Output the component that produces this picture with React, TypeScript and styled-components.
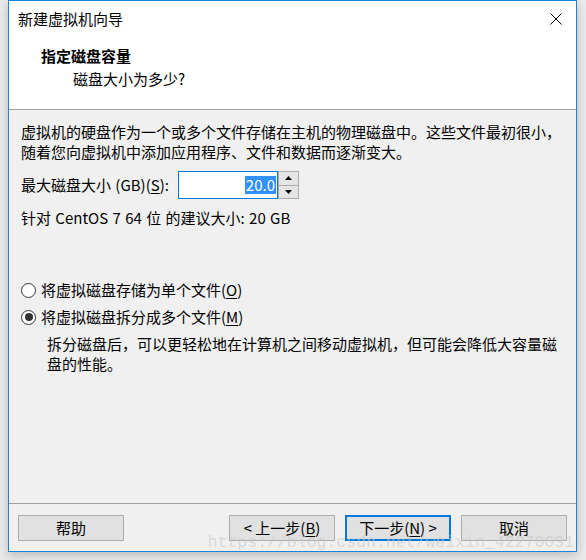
import styled, { createGlobalStyle } from "styled-components";

const GlobalStyle = createGlobalStyle`
	html, body {
		margin: 0;
		padding: 0;
		background: #ebebeb;
	}
	body {
		font-family: "Noto Sans CJK SC", "Noto Sans", sans-serif;
		font-size: 15px;
		color: #000;
	}
`;

const Page = styled.div`
	width: 586px;
	height: 560px;
	padding-left: 8px;
	box-sizing: border-box;
	overflow: hidden;
`;

const Window = styled.div`
	position: relative;
	width: 569px;
	height: 552px;
	box-sizing: border-box;
	border: 1px solid #1883d7;
	background: #f0f0f0;
	display: flex;
	flex-direction: column;
	box-shadow: 0 3px 10px rgba(0, 0, 0, 0.22);
`;

const TitleBar = styled.div`
	height: 36px;
	background: #fff;
	display: flex;
	align-items: center;
	justify-content: space-between;
	padding: 0 14px 0 9px;
	line-height: 20px;
`;

const Header = styled.div`
	background: #fff;
	height: 73px;
	box-sizing: border-box;
	padding: 9px 0 0 32px;
	border-bottom: 1px solid #a0a0a0;
	line-height: 20px;
`;

const HeaderTitle = styled.div`
	font-weight: 700;
`;

const HeaderSub = styled.div`
	margin: 3px 0 0 32px;
`;

const Content = styled.div`
	flex: 1;
	padding: 12px 12px 0 12px;
	line-height: 20px;
`;

const Paragraph = styled.div`
	white-space: nowrap;
`;

const SizeRow = styled.div`
	display: flex;
	align-items: center;
	margin-top: 9px;
`;

const SizeLabel = styled.div`
	width: 157px;
	word-spacing: 1px;
`;

const NumberBox = styled.div`
	width: 100px;
	height: 28px;
	box-sizing: border-box;
	border: 1px solid #0078d7;
	background: #fff;
	display: flex;
	align-items: center;
	justify-content: flex-end;
	padding-right: 1px;
`;

const Selected = styled.span`
	background: #3390ff;
	color: #fff;
	line-height: 18px;
	padding: 0 1px;
`;

const Spinner = styled.div`
	display: flex;
	flex-direction: column;
	width: 21px;
	height: 28px;
`;

const SpinButton = styled.div`
	flex: 1;
	box-sizing: border-box;
	border: 1px solid #adadad;
	background: #e5e5e5;
	display: flex;
	align-items: center;
	justify-content: center;
	& + & {
		border-top: none;
	}
`;

const Hint = styled.div`
	margin-top: 9px;
	word-spacing: 1px;
`;

const RadioRow = styled.div<{ $first?: boolean }>`
	display: flex;
	align-items: center;
	gap: 5px;
	margin-top: ${(p) => (p.$first ? "52px" : "7px")};
`;

const RadioCircle = styled.span<{ $checked?: boolean }>`
	width: 15px;
	height: 15px;
	box-sizing: border-box;
	border-radius: 50%;
	border: 1px solid #333;
	background: #fff;
	display: flex;
	align-items: center;
	justify-content: center;
	&::after {
		content: "";
		width: 8px;
		height: 8px;
		border-radius: 50%;
		background: ${(p) => (p.$checked ? "#333" : "transparent")};
	}
`;

const Description = styled.div`
	margin: 7px 0 0 26px;
	white-space: nowrap;
`;

const Key = styled.span`
	text-decoration: underline;
	text-underline-offset: 2px;
`;

const Footer = styled.div`
	border-top: 1px solid #a0a0a0;
	padding: 11px 9px 10px 9px;
	display: flex;
	gap: 10px;
`;

const Button = styled.div<{ $default?: boolean; $pushRight?: boolean }>`
	width: 106px;
	height: 26px;
	box-sizing: border-box;
	background: #e1e1e1;
	border: ${(p) => (p.$default ? "2px solid #0078d7" : "1px solid #adadad")};
	display: flex;
	align-items: center;
	justify-content: center;
	line-height: 20px;
	margin-left: ${(p) => (p.$pushRight ? "auto" : "0")};
`;

const Watermark = styled.div`
	position: absolute;
	right: 2px;
	bottom: -2px;
	font-family: "Liberation Mono", monospace;
	font-size: 16.5px;
	line-height: 20px;
	color: rgba(200, 200, 200, 0.6);
	pointer-events: none;
	white-space: nowrap;
`;

function CloseIcon() {
	return (
		<svg width="12" height="12" viewBox="0 0 12 12">
			<path d="M0.5 0.5 L11.5 11.5 M11.5 0.5 L0.5 11.5" stroke="#000" strokeWidth="1" />
		</svg>
	);
}

function Arrow({ up }: { up?: boolean }) {
	return (
		<svg width="7" height="4" viewBox="0 0 7 4">
			<path d={up ? "M0 4 L3.5 0 L7 4 Z" : "M0 0 L3.5 4 L7 0 Z"} fill="#000" />
		</svg>
	);
}

export default function App() {
	return (
		<>
			<GlobalStyle />
			<Page>
				<Window>
					<TitleBar>
						<span>新建虚拟机向导</span>
						<CloseIcon />
					</TitleBar>
					<Header>
						<HeaderTitle>指定磁盘容量</HeaderTitle>
						<HeaderSub>磁盘大小为多少?</HeaderSub>
					</Header>
					<Content>
						<Paragraph>
							虚拟机的硬盘作为一个或多个文件存储在主机的物理磁盘中。这些文件最初很小，
						</Paragraph>
						<Paragraph>随着您向虚拟机中添加应用程序、文件和数据而逐渐变大。</Paragraph>
						<SizeRow>
							<SizeLabel>
								最大磁盘大小 (GB)(<Key>S</Key>):
							</SizeLabel>
							<NumberBox>
								<Selected>20.0</Selected>
							</NumberBox>
							<Spinner>
								<SpinButton>
									<Arrow up />
								</SpinButton>
								<SpinButton>
									<Arrow />
								</SpinButton>
							</Spinner>
						</SizeRow>
						<Hint>针对 CentOS 7 64 位 的建议大小: 20 GB</Hint>
						<RadioRow $first>
							<RadioCircle />
							<span>
								将虚拟磁盘存储为单个文件(<Key>O</Key>)
							</span>
						</RadioRow>
						<RadioRow>
							<RadioCircle $checked />
							<span>
								将虚拟磁盘拆分成多个文件(<Key>M</Key>)
							</span>
						</RadioRow>
						<Description>
							拆分磁盘后，可以更轻松地在计算机之间移动虚拟机，但可能会降低大容量磁
							<br />
							盘的性能。
						</Description>
					</Content>
					<Footer>
						<Button>帮助</Button>
						<Button $pushRight>
							&lt; 上一步(<Key>B</Key>)
						</Button>
						<Button $default>
							下一步(<Key>N</Key>) &gt;
						</Button>
						<Button>取消</Button>
					</Footer>
					<Watermark>https://blog.csdn.net/weixin_42270031</Watermark>
				</Window>
			</Page>
		</>
	);
}
